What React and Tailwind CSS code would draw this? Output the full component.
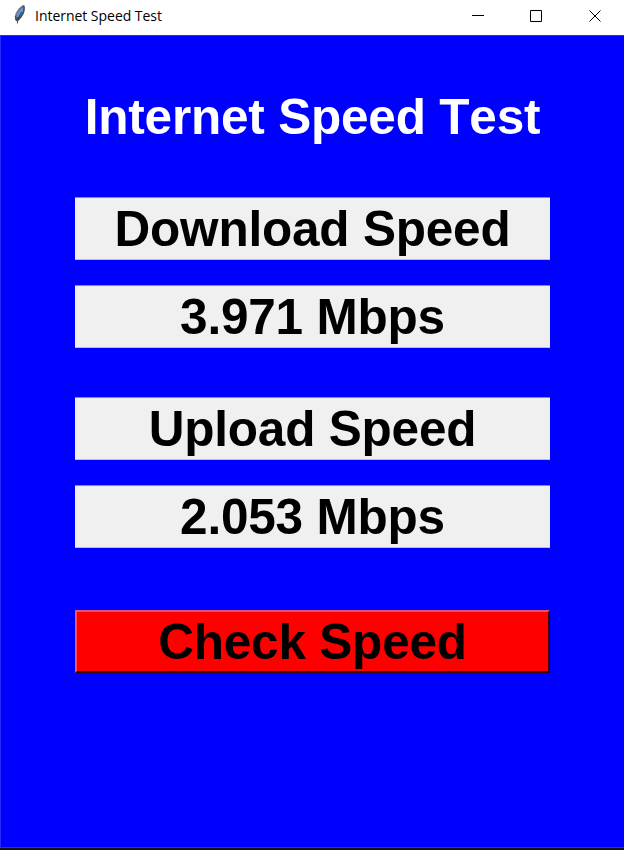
function Feather() {
  return (
    <svg width="14" height="22" viewBox="0 0 14 22" className="mt-[-5px] ml-[13px] shrink-0">
      <path d="M11.200 1C8 1.300 3.200 6.500 1.800 12l.400 4 1.500 1.500 3-2C10.500 12 13.300 5 11.200 1Z" fill="#4a5058" />
      <path d="M10 3C7 5 3.800 9 3.200 13.500l3.500-1C9.500 9 11 6 10 3Z" fill="#5b9be0" />
      <path d="M8.500 8C7 11 5 14 4.300 19.500" fill="none" stroke="#222" strokeWidth=".8" />
      <path d="M10.500 1.500C7.500 3 3.500 8 2.500 12" fill="none" stroke="#a8adb3" strokeWidth=".8" />
    </svg>
  );
}

function Panel({ children, className }) {
  return (
    <div className={`flex h-[63px] w-[475px] shrink-0 items-center justify-center border-y border-t-[#8080f8] border-b-[#b8b8f4] bg-[#f0f0f0] text-black ${className}`}>
      <span className="whitespace-nowrap">{children}</span>
    </div>
  );
}

export default function App() {
  return (
    <div className="flex h-[850px] w-[624px] flex-col overflow-hidden border-b-2 border-[#101010] bg-[#0000ff]">
      <header className="flex h-[35px] shrink-0 items-center bg-white">
        <Feather />
        <span className="mt-[-4px] ml-2 font-['Open_Sans',sans-serif] text-[14px] tracking-[-0.03px] text-black">Internet Speed Test</span>
        <svg width="132" height="14" viewBox="0 0 132 14" className="mt-[-1px] mr-[21px] ml-auto" fill="none" stroke="#000">
          <path d="M1 5.500h12M59.500 .500h11v11h-11z" />
          <path d="M118.500 .500l11 11M129.500 .500l-11 11" />
        </svg>
      </header>
      <main className="flex flex-1 flex-col items-center border-t border-b border-l border-[#2828ff] font-['Liberation_Sans',sans-serif] text-[49.500px] leading-[56px] font-bold tracking-[-0.2px] [font-kerning:none]">
        <h1 className="mt-[53px] whitespace-nowrap text-white">Internet Speed Test</h1>
        <Panel className="mt-[52px]">Download Speed</Panel>
        <Panel className="mt-[25px]">3.971 Mbps</Panel>
        <Panel className="mt-[49px]">Upload Speed</Panel>
        <Panel className="mt-[25px]">2.053 Mbps</Panel>
        <button className="mt-[62px] flex h-[63px] w-[475px] shrink-0 items-center justify-center border-2 border-t-[#e0507f] border-r-[#380000] border-b-[#300000] border-l-[#ff5050] bg-[#ff0000] text-black">
          Check Speed
        </button>
      </main>
    </div>
  );
}
